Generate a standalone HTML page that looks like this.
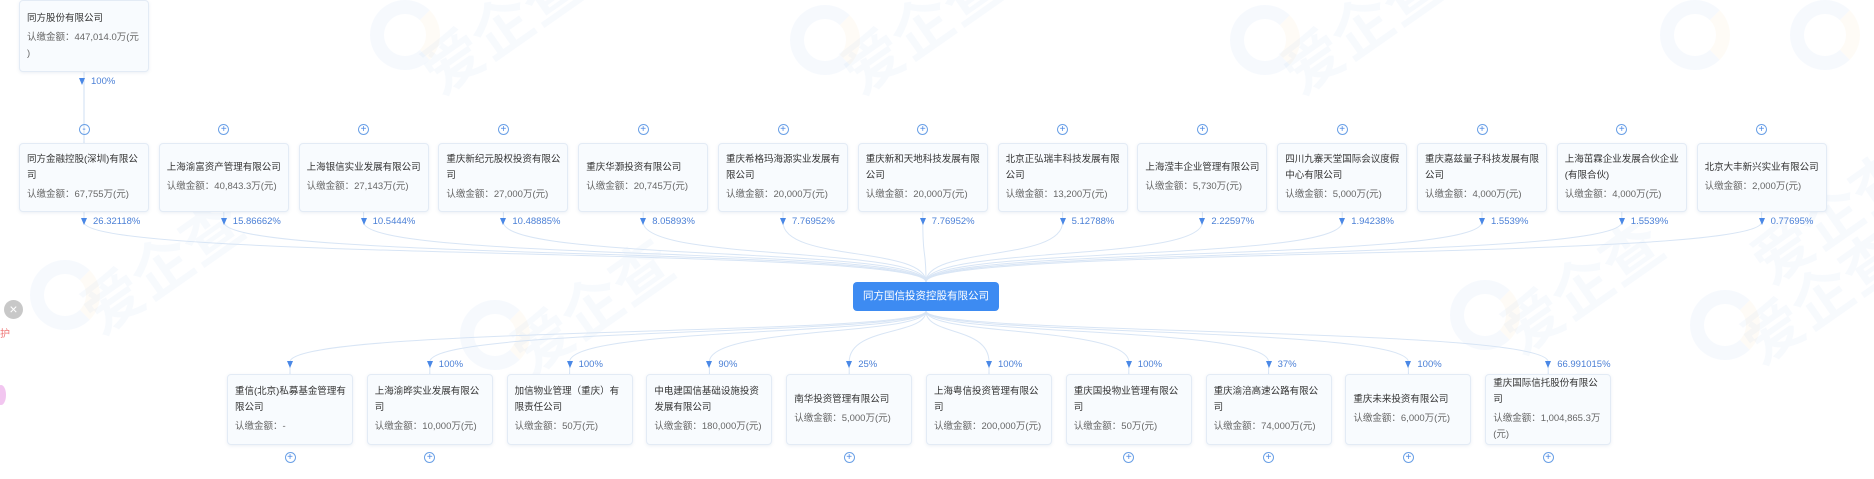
<!DOCTYPE html>
<html><head><meta charset="utf-8"><style>
*{margin:0;padding:0;box-sizing:border-box}
body{width:1874px;height:479px;background:#fff;position:relative;overflow:hidden;font-family:"Liberation Sans","Noto Sans CJK SC",sans-serif;color:#222}
.card{position:absolute;width:130px;background:#f8fbfe;border:1px solid #e3ebf5;border-radius:4px;box-shadow:0 1px 3px rgba(120,150,190,.15);padding:0 6px 0 7px;display:flex;flex-direction:column;justify-content:center;font-size:9.5px;line-height:16px}
.card .t{color:#333}
.card .a{color:#666;margin-top:3px}
.pct{position:absolute;font-size:9.5px;color:#4a7fd6;white-space:nowrap}
.pct:before{content:"";display:inline-block;width:0;height:0;border-left:3px solid transparent;border-right:3px solid transparent;border-top:7px solid #4a88e6;margin-right:6px;vertical-align:-1px}
.pl{position:absolute;width:11px;height:11px;border:1px solid #6aa0e6;border-radius:50%;color:#4a88e6;font-size:10px;line-height:9px;text-align:center}
.wm{position:absolute;font-size:60px;font-weight:bold;color:#3b7fe0;opacity:.035;transform:rotate(-35deg);white-space:nowrap}
.wc{position:absolute;width:70px;height:70px;border:14px solid #3b7fe0;border-radius:50%;opacity:.04;border-right-color:#f5b040}
</style></head><body>
<div class="wc" style="left:30px;top:260px"></div><div class="wm" style="left:70px;top:220px">爱企查</div>
<div class="wc" style="left:460px;top:300px"></div><div class="wm" style="left:500px;top:260px">爱企查</div>
<div class="wc" style="left:790px;top:5px"></div><div class="wm" style="left:830px;top:-20px">爱企查</div>
<div class="wc" style="left:1230px;top:5px"></div><div class="wm" style="left:1270px;top:-20px">爱企查</div>
<div class="wc" style="left:1450px;top:280px"></div><div class="wm" style="left:1490px;top:240px">爱企查</div>
<div class="wc" style="left:1690px;top:290px"></div><div class="wm" style="left:1730px;top:250px">爱企查</div>
<div class="wc" style="left:1790px;top:0px"></div><div class="wm" style="left:1740px;top:170px">爱企查</div>
<div class="wc" style="left:370px;top:0px"></div><div class="wm" style="left:410px;top:-20px">爱企查</div>
<div class="wc" style="left:1660px;top:0px"></div>

<svg width="1874" height="479" style="position:absolute;left:0;top:0">
<g fill="none" stroke="#cfdff3" stroke-width="1">
<path d="M84 72 L84 143"/>
</g>
<g id="lines" fill="none" stroke="#d8e5f5" stroke-width="1"></g>
</svg>

<div class="card" style="left:19px;top:0;height:72px"><div class="t">同方股份有限公司</div><div class="a">认缴金额：447,014.0万(元<br>)</div></div>
<div class="pct" style="left:79px;top:76px">100%</div>

<div id="top"></div><div id="bot"></div>

<div style="position:absolute;left:853px;top:282px;width:146px;height:29px;background:#3d8bf2;border-radius:4px;color:#fff;font-size:10.5px;line-height:29px;text-align:center">同方国信投资控股有限公司</div>

<div style="position:absolute;left:4px;top:300px;width:19px;height:19px;border-radius:50%;background:#c8c8c8;color:#fff;font-size:14px;line-height:19px;text-align:center">×</div>
<div style="position:absolute;left:0;top:325px;font-size:10px;color:#e77">护</div>
<div style="position:absolute;left:-4px;top:385px;width:10px;height:20px;border-radius:50%;background:#e9a0e6;opacity:.6"></div>

<script>
var T=[["同方金融控股(深圳)有限公司","67,755万(元)","26.32118%"],["上海渝富资产管理有限公司","40,843.3万(元)","15.86662%"],["上海银信实业发展有限公司","27,143万(元)","10.5444%"],["重庆新纪元股权投资有限公司","27,000万(元)","10.48885%"],["重庆华灏投资有限公司","20,745万(元)","8.05893%"],["重庆希格玛海源实业发展有限公司","20,000万(元)","7.76952%"],["重庆新和天地科技发展有限公司","20,000万(元)","7.76952%"],["北京正弘瑞丰科技发展有限公司","13,200万(元)","5.12788%"],["上海滢丰企业管理有限公司","5,730万(元)","2.22597%"],["四川九寨天堂国际会议度假中心有限公司","5,000万(元)","1.94238%"],["重庆嘉兹量子科技发展有限公司","4,000万(元)","1.5539%"],["上海茁霖企业发展合伙企业(有限合伙)","4,000万(元)","1.5539%"],["北京大丰新兴实业有限公司","2,000万(元)","0.77695%"]];
var B=[["重信(北京)私募基金管理有限公司","-","",1],["上海渝晔实业发展有限公司","10,000万(元)","100%",1],["加信物业管理（重庆）有限责任公司","50万(元)","100%",0],["中电建国信基础设施投资发展有限公司","180,000万(元)","90%",0],["南华投资管理有限公司","5,000万(元)","25%",1],["上海粤信投资管理有限公司","200,000万(元)","100%",0],["重庆国投物业管理有限公司","50万(元)","100%",1],["重庆渝涪高速公路有限公司","74,000万(元)","37%",1],["重庆未来投资有限公司","6,000万(元)","100%",1],["重庆国际信托股份有限公司","1,004,865.3万(元)","66.991015%",1]];
var h="",b="",L="",cx=926;
T.forEach(function(d,i){var x=19+i*139.8,c=x+65;
h+='<div class="card" style="left:'+x+'px;top:143px;height:69px"><div class="t">'+d[0]+'</div><div class="a">认缴金额：'+d[1]+'</div></div>';
h+='<div class="pl" style="left:'+(c-5.5)+'px;top:124px">'+(i==0?'-':'+')+'</div>';
h+='<div class="pct" style="left:'+(c-3)+'px;top:216px">'+d[2]+'</div>';
L+='<path d="M'+c+' 212 L'+c+' 222 C'+c+' 262 '+cx+' 246 '+cx+' 282"/>';});
B.forEach(function(d,i){var x=227+i*139.8,c=x+63;
b+='<div class="card" style="width:126px;left:'+x+'px;top:374px;height:71px"><div class="t">'+d[0]+'</div><div class="a">认缴金额：'+d[1]+'</div></div>';
if(d[3])b+='<div class="pl" style="left:'+(c-5.5)+'px;top:452px">+</div>';
b+='<div class="pct" style="left:'+(c-3)+'px;top:359px">'+d[2]+'</div>';
L+='<path d="M'+cx+' 311 C'+cx+' 336 '+c+' 326 '+c+' 362 L'+c+' 374"/>';});
document.getElementById('top').outerHTML=h;document.getElementById('bot').outerHTML=b;
document.getElementById('lines').innerHTML=L;
</script>
</body></html>
